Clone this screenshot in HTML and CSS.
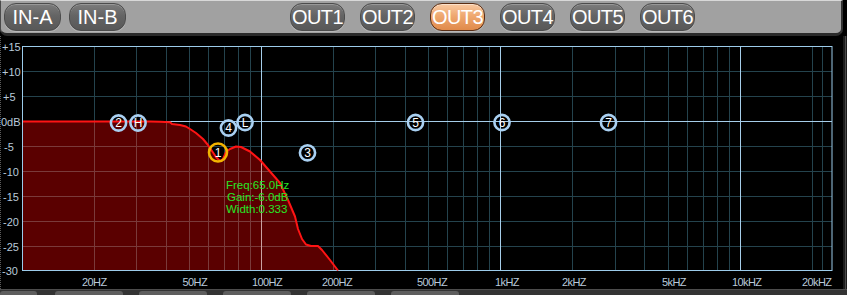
FILE: index.html
```html
<!DOCTYPE html>
<html>
<head>
<meta charset="utf-8">
<link rel="stylesheet" href="styles.css">
</head>
<body>
<div class="app">
  <div class="topbar">
    <div class="btn in">IN-A</div>
    <div class="btn in">IN-B</div>
    <div class="outs">
      <div class="btn out">OUT1</div>
      <div class="btn out">OUT2</div>
      <div class="btn out active">OUT3</div>
      <div class="btn out">OUT4</div>
      <div class="btn out">OUT5</div>
      <div class="btn out">OUT6</div>
    </div>
  </div>
  <svg class="plot" width="847" height="253" viewBox="0 36 847 253" xmlns="http://www.w3.org/2000/svg">
    <defs>
      <clipPath id="under">
        <path d="M22.5,121.5 L150,121.5 L160,121.8 L170,122.2 L172,124 L180,125 L186,126.5 L190,129 L196,133 L203,139 L208,145 L212,151 L216,157 L220,161 L223,159 L226,152 L230,149 L236,146.5 L241,147 L250,151.5 L260,160 L270,171.5 L280,183 L288,200 L295,216.5 L298,229 L302,239 L306,244.5 L311,246 L318,246 L322,250 L330,260 L338,270.5 L22.5,270.5 Z"/>
      </clipPath>
      <g id="vdark">
        <path d="M94.5,46.5V270.5 M136.5,46.5V270.5 M166.5,46.5V270.5 M189.5,46.5V270.5 M208.5,46.5V270.5 M224.5,46.5V270.5 M238.5,46.5V270.5 M250.5,46.5V270.5 M333.5,46.5V270.5 M375.5,46.5V270.5 M405.5,46.5V270.5 M428.5,46.5V270.5 M447.5,46.5V270.5 M463.5,46.5V270.5 M477.5,46.5V270.5 M489.5,46.5V270.5 M572.5,46.5V270.5 M615.5,46.5V270.5 M644.5,46.5V270.5 M668.5,46.5V270.5 M687.5,46.5V270.5 M703.5,46.5V270.5 M717.5,46.5V270.5 M729.5,46.5V270.5 M812.5,46.5V270.5 M822.5,46.5V270.5 M22.5,71.5H832 M22.5,96.5H832 M22.5,146.5H832 M22.5,171.5H832 M22.5,196.5H832 M22.5,221.5H832 M22.5,246.5H832"/>
      </g>
      <g id="vbright">
        <path d="M261.5,46.5V270.5 M500.5,46.5V270.5 M740.5,46.5V270.5 M22.5,121.5H832"/>
      </g>
    </defs>
    <rect x="0" y="36" width="847" height="253" fill="#000"/>
    <rect x="843" y="36" width="4" height="253" fill="#1c1c1c"/>
    <line x1="845.5" y1="36" x2="845.5" y2="289" stroke="#4a4a4a"/>
    <line x1="0.5" y1="36" x2="0.5" y2="289" stroke="#5a5a5a" stroke-dasharray="1 1"/>

    <use href="#vdark" class="grid-dark"/>
    <use href="#vbright" class="grid-bright"/>

    <path class="fill" d="M22.5,121.5 L150,121.5 L160,121.8 L170,122.2 L172,124 L180,125 L186,126.5 L190,129 L196,133 L203,139 L208,145 L212,151 L216,157 L220,161 L223,159 L226,152 L230,149 L236,146.5 L241,147 L250,151.5 L260,160 L270,171.5 L280,183 L288,200 L295,216.5 L298,229 L302,239 L306,244.5 L311,246 L318,246 L322,250 L330,260 L338,270.5 L22.5,270.5 Z"/>
    <g clip-path="url(#under)">
      <use href="#vdark" class="grid-dark-red"/>
      <use href="#vbright" class="grid-bright-red"/>
    </g>

    <rect class="frame" x="22.5" y="46.5" width="809.5" height="224"/>

    <path class="curve" d="M23,121.5 L150,121.5 L160,121.8 L170,122.2 L172,124 L180,125 L186,126.5 L190,129 L196,133 L203,139 L208,145 L212,151 L216,157 L220,161 L223,159 L226,152 L230,149 L236,146.5 L241,147 L250,151.5 L260,160 L270,171.5 L280,183 L288,200 L295,216.5 L298,229 L302,239 L306,244.5 L311,246 L318,246 L322,250 L330,260 L338,270.5"/>

    <g class="ylab">
      <text x="2" y="50.5">+15</text>
      <text x="2" y="75.5">+10</text>
      <text x="3" y="100.5">+5</text>
      <text x="1" y="125.5">0dB</text>
      <text x="4" y="150.5">-5</text>
      <text x="3" y="175.5">-10</text>
      <text x="3" y="200.5">-15</text>
      <text x="3" y="225.5">-20</text>
      <text x="3" y="250.5">-25</text>
      <text x="2" y="274.5">-30</text>
    </g>
    <g class="xlab">
      <text x="82" y="285.5">20HZ</text>
      <text x="182.5" y="285.5">50HZ</text>
      <text x="252" y="285.5">100HZ</text>
      <text x="322" y="285.5">200HZ</text>
      <text x="417" y="285.5">500HZ</text>
      <text x="495" y="285.5">1kHZ</text>
      <text x="562" y="285.5">2kHZ</text>
      <text x="662" y="285.5">5kHZ</text>
      <text x="732" y="285.5">10kHZ</text>
      <text x="802" y="285.5">20kHZ</text>
    </g>

    <g class="marks">
      <circle cx="118.5" cy="123" r="7.6"/>
      <circle cx="138" cy="123" r="7.6"/>
      <circle cx="228.5" cy="128" r="7.6"/>
      <circle cx="245" cy="122.5" r="7.6"/>
      <circle cx="307.5" cy="152.8" r="7.6"/>
      <circle cx="415.5" cy="122.5" r="7.6"/>
      <circle cx="502" cy="122.5" r="7.6"/>
      <circle cx="608.5" cy="122.5" r="7.6"/>
      <circle class="sel" cx="218" cy="152.5" r="9"/>
    </g>
    <g class="mlab">
      <text x="118.5" y="127.3">2</text>
      <text x="138" y="127.3">H</text>
      <text x="228.5" y="132.3">4</text>
      <text x="245" y="126.8">L</text>
      <text x="307.5" y="157">3</text>
      <text x="415.5" y="126.8">5</text>
      <text x="502" y="126.8">6</text>
      <text x="608.5" y="126.8">7</text>
      <text x="218" y="156.8">1</text>
    </g>

    <g class="info">
      <text x="226" y="188.5">Freq:65.0Hz</text>
      <text x="227" y="200.5">Gain:-6.0dB</text>
      <text x="226" y="212.5">Width:0.333</text>
    </g>
  </svg>
  <div class="tabs">
    <div class="tab first"></div>
    <div class="tab"></div>
    <div class="tab"></div>
    <div class="tab"></div>
    <div class="tab"></div>
    <div class="tab"></div>
  </div>
</div>
</body>
</html>
```
FILE: styles.css
```css
html, body {
  margin: 0;
  padding: 0;
  background: #000;
}
.app {
  width: 847px;
  height: 295px;
  overflow: hidden;
  background: #000;
  font-family: "Liberation Sans", Arial, sans-serif;
}
.topbar {
  box-sizing: border-box;
  width: 843px;
  height: 36px;
  background: #a1a1a1;
  border-top: 1px solid #d8d8d8;
  border-bottom: 3px solid #2a2a2a;
  border-left: 1px solid #4a4a4a;
  border-right: 2px solid #333;
  border-radius: 0 0 7px 7px;
  display: flex;
  align-items: flex-start;
  padding: 2px 0 0 3px;
}
.btn {
  box-sizing: border-box;
  height: 28px;
  border-radius: 12px;
  border: 1px solid #4c4c4c;
  background: linear-gradient(#7c7c7c 0%, #646464 45%, #585858 100%);
  box-shadow: inset 0 1px 0 rgba(255,255,255,0.22), 0 1px 0 rgba(255,255,255,0.25);
  color: #fff;
  font-size: 20px;
  line-height: 26px;
  text-align: center;
  white-space: nowrap;
}
.btn.in {
  width: 57px;
}
.btn.in + .btn.in {
  margin-left: 8px;
}
.outs {
  display: flex;
  gap: 15px;
  margin-left: 164px;
}
.btn.out {
  width: 55px;
  letter-spacing: -0.6px;
}
.btn.active {
  border: 1.5px solid #5a2e14;
  background: linear-gradient(#f9caa2 0%, #efa870 45%, #e08a4a 100%);
  box-shadow: inset 0 1px 0 rgba(255,255,255,0.45), 0 1px 0 rgba(255,255,255,0.25);
}
.plot {
  display: block;
}
.grid-dark {
  stroke: #24434d;
  stroke-width: 1;
  fill: none;
}
.grid-bright {
  stroke: #a6cde9;
  stroke-width: 1;
  fill: none;
}
.grid-dark-red {
  stroke: #7a3a3a;
  stroke-width: 1;
  fill: none;
}
.grid-bright-red {
  stroke: #caa0a0;
  stroke-width: 1;
  fill: none;
}
.fill {
  fill: #5a0000;
  stroke: none;
}
.frame {
  fill: none;
  stroke: #9ccbea;
  stroke-width: 1;
}
.curve {
  fill: none;
  stroke: #ff1414;
  stroke-width: 2;
  stroke-linejoin: round;
}
.ylab text, .xlab text {
  font-family: "Liberation Sans", Arial, sans-serif;
  font-size: 11px;
  fill: #b9cadb;
}
.xlab text {
  letter-spacing: -0.6px;
}
.marks circle {
  fill: none;
  stroke: #a9d0f2;
  stroke-width: 2.6;
}
.marks circle.sel {
  stroke: #f2b400;
  stroke-width: 2.6;
}
.mlab text {
  font-family: "Liberation Sans", Arial, sans-serif;
  font-size: 12px;
  fill: #fff;
  text-anchor: middle;
}
.info text {
  font-family: "Liberation Sans", Arial, sans-serif;
  font-size: 11.5px;
  fill: #26e626;
}
.tabs {
  height: 6px;
  background: #333;
  border-top: 1px solid #4c4c4c;
  display: flex;
  gap: 16px;
  padding-left: 55px;
}
.tab {
  width: 68px;
  height: 5px;
  margin-top: 1px;
  background: #5e5e5e;
  border-radius: 3px 3px 0 0;
}
.tab.first {
  width: 37px;
  margin-left: -55px;
  margin-right: 2px;
}
```
